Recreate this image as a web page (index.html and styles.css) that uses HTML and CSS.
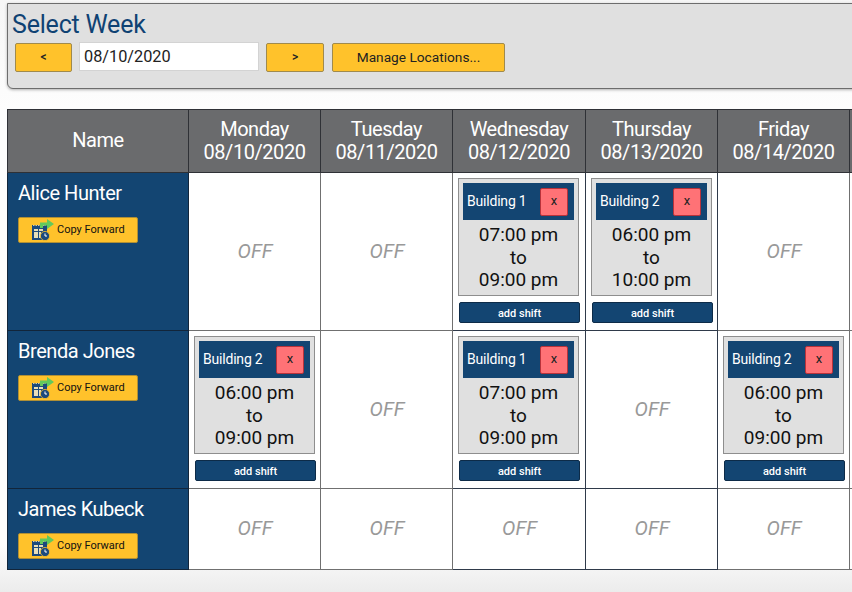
FILE: index.html
```html
<!DOCTYPE html>
<html lang="en">
<head>
<meta charset="utf-8">
<title>Select Week</title>
<link rel="stylesheet" href="styles.css">
</head>
<body>
<svg class="defs" width="0" height="0" aria-hidden="true">
  <symbol id="copy-icon" viewBox="0 0 22 22">
    <rect x="0" y="6" width="15" height="15" fill="#1d4a7c"/>
    <path d="M1 6.500h13" stroke="#d9cfa0" stroke-width="1" stroke-dasharray="1.500 1"/>
    <path d="M2 10h4v2H2zM7 10h4v2H7zM2 13h4v6H2zM7 13h2v6H7z" fill="#e9dfb8"/>
    <circle cx="13" cy="17" r="4.600" fill="#1d4a7c" stroke="#ffc328" stroke-width=".8"/>
    <path d="M13 14.500V17h2" fill="none" stroke="#fff" stroke-width="1"/>
    <path d="M8 9V3.500h7V0l7 5-7 5V6.500h-4V9z" fill="#62c95c"/>
  </symbol>
</svg>

<section class="week-panel">
  <h1 class="panel-title">Select Week</h1>
  <div class="panel-controls">
    <button class="btn btn-nav">&lt;</button>
    <input class="date-input" type="text" value="08/10/2020">
    <button class="btn btn-nav btn-next">&gt;</button>
    <button class="btn btn-manage">Manage Locations...</button>
  </div>
</section>

<table class="schedule">
  <colgroup>
    <col class="col-name"><col class="col-d1"><col class="col-d1"><col class="col-d2"><col class="col-d1"><col class="col-d1"><col class="col-d1">
  </colgroup>
  <thead>
    <tr>
      <th>Name</th>
      <th>Monday<br>08/10/2020</th>
      <th>Tuesday<br>08/11/2020</th>
      <th>Wednesday<br>08/12/2020</th>
      <th>Thursday<br>08/13/2020</th>
      <th>Friday<br>08/14/2020</th>
      <th></th>
    </tr>
  </thead>
  <tbody>
    <tr class="row-tall">
      <td class="person"><div class="person-name">Alice Hunter</div><button class="btn-copy"><svg class="copy-icon"><use href="#copy-icon"/></svg>Copy Forward</button></td>
      <td class="off">OFF</td>
      <td class="off">OFF</td>
      <td class="day"><div class="shift"><div class="shift-head"><span>Building 1</span><button class="btn-x">x</button></div><div class="shift-time">07:00 pm<br>to<br>09:00 pm</div></div><button class="btn-add">add shift</button></td>
      <td class="day"><div class="shift"><div class="shift-head"><span>Building 2</span><button class="btn-x">x</button></div><div class="shift-time">06:00 pm<br>to<br>10:00 pm</div></div><button class="btn-add">add shift</button></td>
      <td class="off">OFF</td>
      <td class="off"></td>
    </tr>
    <tr class="row-tall">
      <td class="person"><div class="person-name">Brenda Jones</div><button class="btn-copy"><svg class="copy-icon"><use href="#copy-icon"/></svg>Copy Forward</button></td>
      <td class="day"><div class="shift"><div class="shift-head"><span>Building 2</span><button class="btn-x">x</button></div><div class="shift-time">06:00 pm<br>to<br>09:00 pm</div></div><button class="btn-add">add shift</button></td>
      <td class="off">OFF</td>
      <td class="day"><div class="shift"><div class="shift-head"><span>Building 1</span><button class="btn-x">x</button></div><div class="shift-time">07:00 pm<br>to<br>09:00 pm</div></div><button class="btn-add">add shift</button></td>
      <td class="off">OFF</td>
      <td class="day"><div class="shift"><div class="shift-head"><span>Building 2</span><button class="btn-x">x</button></div><div class="shift-time">06:00 pm<br>to<br>09:00 pm</div></div><button class="btn-add">add shift</button></td>
      <td class="off"></td>
    </tr>
    <tr class="row-short">
      <td class="person"><div class="person-name">James Kubeck</div><button class="btn-copy"><svg class="copy-icon"><use href="#copy-icon"/></svg>Copy Forward</button></td>
      <td class="off">OFF</td>
      <td class="off">OFF</td>
      <td class="off">OFF</td>
      <td class="off">OFF</td>
      <td class="off">OFF</td>
      <td class="off"></td>
    </tr>
  </tbody>
</table>
</body>
</html>
```

FILE: styles.css
```css
* { box-sizing: border-box; }

html, body { height: 100%; }

body {
  margin: 0;
  width: 852px;
  height: 592px;
  overflow: hidden;
  padding: 3px 0 0 7px;
  background: linear-gradient(#f6f6f6, #fdfdfd 18%, #fdfdfd 92%, #ececec);
  font-family: Roboto, "Liberation Sans", sans-serif;
}

.defs { display: block; height: 0; }

button { font-family: inherit; cursor: pointer; }

.week-panel {
  width: 900px;
  height: 86px;
  padding: 7px 0 0 4px;
  background: #e0e0e0;
  border: 1px solid #6d6d6d;
  border-radius: 0 0 0 6px;
  box-shadow: 0 1px 3px rgba(0, 0, 0, .3);
}

.panel-title {
  margin: 0;
  font-size: 25px;
  font-weight: 400;
  letter-spacing: -.2px;
  line-height: 28px;
  color: #0f4273;
}

.panel-controls {
  display: flex;
  align-items: flex-start;
  gap: 7px;
  margin-top: 3px;
  padding-left: 3px;
}

.btn {
  height: 29px;
  margin-top: 1px;
  padding: 0 0 1px;
  background: #ffc22b;
  border: 1px solid #a08a4c;
  border-radius: 2px;
  color: #222;
  font-size: 13.7px;
}

.btn-nav { width: 57px; font-size: 12px; font-weight: 500; }
.btn-next { width: 58px; }
.btn-manage { width: 173px; margin-left: 1px; }

.date-input {
  width: 180px;
  height: 29px;
  padding: 0 4px;
  border: 1px solid #d3d3d3;
  background: #fff;
  color: #222;
  font-family: inherit;
  font-size: 16.3px;
}

.schedule {
  width: 974px;
  margin-top: 20px;
  border-collapse: collapse;
  table-layout: fixed;
  border-bottom: 1px solid #8a8a8a;
}

.col-name { width: 181px; }
.col-d1 { width: 132px; }
.col-d2 { width: 133px; }

.schedule th {
  height: 63px;
  padding: 0 0 1px;
  background: #6a6b6d;
  border: 1px solid #2f3136;
  color: #fff;
  font-size: 20px;
  font-weight: 400;
  letter-spacing: -.45px;
  line-height: 23px;
  text-align: center;
}

.schedule td { padding: 0; border: 1px solid #707070; }

.row-tall { height: 158px; }
.row-short { height: 81px; }

.schedule tr > td:nth-child(4),
.schedule tr > td:nth-child(5) { border-color: #2f3a4a; }

td.person {
  padding: 9px 0 0 10px;
  vertical-align: top;
  background: #134572;
  border-color: #12253a;
}

.person-name {
  color: #fff;
  font-size: 20px;
  font-weight: 400;
  letter-spacing: -.45px;
  line-height: 23px;
}

.btn-copy {
  display: flex;
  align-items: center;
  width: 120px;
  height: 26px;
  margin-top: 12px;
  padding: 0 0 2px 13px;
  background: #ffc22b;
  border: 1px solid #b08f35;
  border-radius: 2px;
  color: #111;
  font-size: 11px;
  white-space: nowrap;
}

.copy-icon { width: 22px; height: 22px; margin: 0 3px -1px 0; }

td.off {
  padding: 0 0 2px 1px;
  background: #fff;
  color: #999;
  font-size: 20px;
  font-style: italic;
  text-align: center;
}

td.day {
  padding: 5px 0 0 5px;
  vertical-align: top;
  background: #fff;
}

.shift {
  width: 121px;
  height: 118px;
  padding: 4px;
  background: #e0e0e0;
  border: 1px solid #8e8e8e;
}

.shift-head {
  display: flex;
  align-items: center;
  justify-content: space-between;
  height: 37px;
  padding: 0 6px 2px 4px;
  background: #134572;
  color: #fff;
  font-size: 14px;
  letter-spacing: -.2px;
}

.btn-x {
  width: 28px;
  height: 28px;
  margin-top: 2px;
  padding: 0 0 2px;
  background: #ff7276;
  border: 1px solid #b8323a;
  border-radius: 2px;
  color: #222;
  font-size: 13px;
}

.shift-time {
  margin-top: 4px;
  color: #111;
  font-size: 19px;
  line-height: 22.5px;
  text-align: center;
}

.btn-add {
  display: block;
  width: 121px;
  height: 21px;
  margin: 6px 0 0 1px;
  padding: 1px 0 0;
  background: #134572;
  border: 1px solid #0d2b48;
  border-radius: 2px;
  color: #fff;
  font-size: 11px;
  font-weight: 500;
}
```
